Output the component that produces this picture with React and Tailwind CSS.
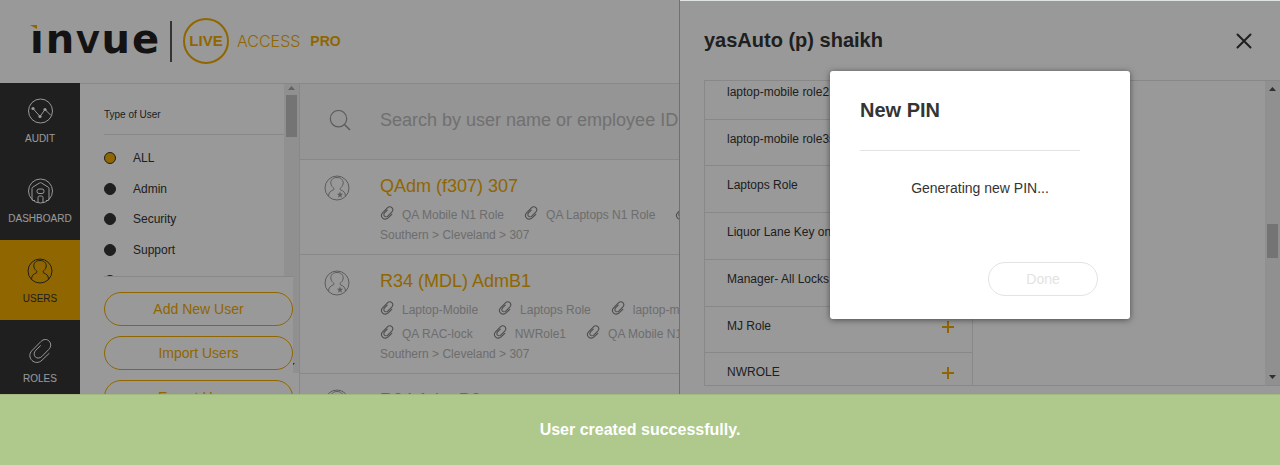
import React from "react";

const sans = "font-['Liberation_Sans',Arial,sans-serif]";

function AuditIcon() {
  return (
    <svg viewBox="0 0 26 26" className="size-[26px]" fill="none" stroke="currentColor" strokeWidth="1" aria-hidden="true">
      <circle cx="13.500" cy="13" r="12" />
      <path d="M6 10.500 L13 18.500 L18 11.500 L24 17.500" />
      <g fill="currentColor" stroke="none">
        <circle cx="6" cy="10.500" r="1.600" />
        <circle cx="13" cy="18.500" r="1.600" />
        <circle cx="18" cy="11.500" r="1.600" />
      </g>
    </svg>
  );
}

function HomeIcon() {
  return (
    <svg viewBox="0 0 26 26" className="size-[26px]" fill="none" stroke="currentColor" strokeWidth="1" aria-hidden="true">
      <circle cx="13.500" cy="13" r="12" />
      <path d="M8 22.500 H6.500 Q5 22.500 5 21 V10.500 Q5 9.500 6 9 L12.500 5 Q13.500 4.300 14.500 5 L21 9 Q22 9.500 22 10.500 V21 Q22 22.500 20.500 22.500 H19" />
      <rect x="10" y="11" width="7" height="4.500" rx="2" />
      <path d="M11 24.500 V19.500 Q11 18 12.500 18 H14.500 Q16 18 16 19.500 V24.500" />
    </svg>
  );
}

function UserIcon({ star }) {
  return (
    <svg viewBox="0 0 26 26" className="size-[26px] shrink-0" fill="none" stroke="currentColor" strokeWidth="1" aria-hidden="true">
      <circle cx="13" cy="13" r="12" />
      <path d="M4.500 21.500 C4.500 17.500 6.500 16 9.500 14.800 C10.500 14.300 10 13.300 9 12.500 C7.500 11 6.800 9.500 6.800 7.800 C6.800 4.500 9.500 2.500 13 2.500 C16.500 2.500 19.200 4.500 19.200 7.800 C19.200 9.500 18.500 11 17 12.500 C16 13.300 15.500 14.300 16.500 14.800 C19.500 16 21.500 17.500 21.500 21.500" />
      {star && (
        <path
          fill="currentColor"
          stroke="none"
          d="M16 16.300 L16.800 18.800 L19.200 18.800 L17.300 20.300 L18 22.800 L16 21.300 L14 22.800 L14.700 20.300 L12.800 18.800 L15.200 18.800 Z"
        />
      )}
    </svg>
  );
}

function ClipIcon({ className, strokeWidth = 1 }) {
  return (
    <svg viewBox="0 0 26 26" className={className} fill="none" stroke="currentColor" strokeWidth={strokeWidth} strokeLinecap="round" aria-hidden="true">
      <path d="M22 15.500 L15 22.200 C12 25.200 7.500 25 5 22.500 C2.300 19.800 2 15.700 4.800 12.800 L13.800 3.600 C16.600 0.800 20 1 22 3 C24.200 5.200 24.400 8.600 21.800 11.400 L15 18.400 C13 20.400 10 20.600 8.300 18.900 C6.600 17.200 6.800 14.200 8.800 12.200 L13.500 7.700" />
    </svg>
  );
}

function SearchIcon() {
  return (
    <svg viewBox="0 0 22 22" className="size-[22px] shrink-0 text-[#999]" fill="none" stroke="currentColor" strokeWidth="1.200" aria-hidden="true">
      <circle cx="9.500" cy="8.700" r="8.200" />
      <path d="M15.500 14.500 L21 20" strokeWidth="1.500" />
    </svg>
  );
}

function Arrow({ down, className }) {
  return (
    <svg viewBox="0 0 7 4" className={`h-1 w-[7px] shrink-0 ${className}`} fill="currentColor" aria-hidden="true">
      <path d={down ? "M0 0 H7 L3.500 4 Z" : "M0 4 H7 L3.500 0 Z"} />
    </svg>
  );
}

function Brand() {
  return (
    <div className="flex items-center" aria-label="InVue Live Access Pro">
      <div className="relative flex w-[130px] items-baseline gap-[2px] font-['DejaVu_Sans',sans-serif] text-[40px] leading-[40px] font-bold text-[#231f20]">
        <svg viewBox="0 0 7 4" className="absolute top-[6px] left-0 h-1 w-[7px] fill-[#f0ab00]" aria-hidden="true">
          <path d="M0 0 H7 V4 Z" />
        </svg>
        <span>ı</span>
        <span>n</span>
        <span className="text-[30px]">V</span>
        <span>u</span>
        <span>e</span>
      </div>
      <div className="ml-[10px] h-[41px] w-[2px] bg-[#58585a]" />
      <div className="ml-[11px] flex size-[46px] items-center justify-center rounded-full border-2 border-[#f0ab00] text-[15px] font-bold text-[#f0ab00]">
        LIVE
      </div>
      <div className="ml-2 flex items-center gap-[10px] text-[16px] text-[#f0ab00]">
        <span className="font-[Inter,sans-serif] font-light">ACCESS</span>
        <span className="text-[14px] font-bold">PRO</span>
      </div>
    </div>
  );
}

const nav = [
  { label: "AUDIT", icon: <AuditIcon />, cls: "h-[77px] text-white" },
  { label: "DASHBOARD", icon: <HomeIcon />, cls: "h-20 text-white" },
  { label: "USERS", icon: <UserIcon />, cls: "h-20 bg-[#f0ab00] text-[#343434]" },
  { label: "ROLES", icon: <ClipIcon className="size-[26px]" />, cls: "h-20 text-white" },
];

const userTypes = ["ALL", "Admin", "Security", "Support", "User"];

const users = [
  {
    name: "QAdm (f307) 307",
    roles: [["QA Mobile N1 Role", "QA Laptops N1 Role", "Laptop-Mobile"]],
  },
  {
    name: "R34 (MDL) AdmB1",
    roles: [
      ["Laptop-Mobile", "Laptops Role", "laptop-mobile role2"],
      ["QA RAC-lock", "NWRole1", "QA Mobile N1 Role"],
    ],
  },
  { name: "R34 Adm B2", roles: [["Laptops Role"]] },
];

const roles = [
  "laptop-mobile role2",
  "laptop-mobile role3s",
  "Laptops Role",
  "Liquor Lane Key only",
  "Manager- All Locks",
  "MJ Role",
  "NWROLE",
];

function Sidebar() {
  return (
    <nav className="w-20 shrink-0 bg-[#343434]">
      {nav.map((n) => (
        <a key={n.label} href={`#${n.label.toLowerCase()}`} className={`flex flex-col items-center justify-end gap-[9px] pb-[15px] text-[10px] leading-[12px] ${n.cls}`}>
          {n.icon}
          {n.label}
        </a>
      ))}
    </nav>
  );
}

function Filters() {
  return (
    <aside className="relative flex w-[220px] shrink-0 flex-col border-t border-r border-[#e3e3e3]">
      <div className="flex h-[289px] justify-between">
        <fieldset className="h-48 flex-1 overflow-hidden pl-6">
          <legend className="contents">
            <span className="flex h-[51px] items-end border-b border-[#e3e3e3] pb-[13px] text-[10px] leading-[12px] text-[#343434]">
              Type of User
            </span>
          </legend>
          <div className="mt-2 grid h-[153px] grid-rows-5">
            {userTypes.map((t, i) => (
              <label key={t} className="flex items-center gap-[17px] text-[12px] leading-[16px] text-[#343434]">
                <input
                  type="radio"
                  name="userType"
                  defaultChecked={i === 0}
                  className="size-3 appearance-none rounded-full border border-[#343434] bg-[#343434] checked:bg-[#f0ab00]"
                />
                {t}
              </label>
            ))}
          </div>
        </fieldset>
        <div className="flex w-[15px] flex-col items-center gap-[5px] bg-[#f1f1f1] pt-[2px] pb-[6px]">
          <Arrow className="text-[#a3a3a3]" />
          <div className="h-[42px] w-[11px] bg-[#c1c1c1]" />
          <Arrow down className="mt-auto text-[#505050]" />
        </div>
      </div>
      <div className="absolute top-48 left-6 flex w-[189px] flex-col gap-[10px] border-t border-[#e3e3e3] bg-white pt-[15px]">
        {["Add New User", "Import Users", "Export Users"].map((b) => (
          <button key={b} type="button" className="h-[34px] rounded-full border border-[#f0ab00] text-[14px] text-[#f0ab00]">
            {b}
          </button>
        ))}
      </div>
    </aside>
  );
}

function UserList() {
  return (
    <main className="min-w-0 flex-1 border-t border-[#e3e3e3] whitespace-nowrap">
      <div className="flex h-[76px] items-center gap-[29px] border-b border-[#e3e3e3] bg-[#f8f8f8] pb-[2px] pl-[29px]">
        <SearchIcon />
        <input
          type="search"
          aria-label="Search users"
          placeholder="Search by user name or employee ID"
          className="w-full bg-transparent text-[18px] text-[#343434] outline-none placeholder:text-[#bbb]"
        />
      </div>
      {users.map((u) => (
        <article key={u.name} className="flex gap-[30px] border-b border-[#e3e3e3] pt-[14px] pb-[11px] pl-6 text-[#999]">
          <div className="pt-px">
            <UserIcon star />
          </div>
          <div>
            <h2 className="mb-[5px] text-[18px] leading-[24px] text-[#f0ab00]">{u.name}</h2>
            {u.roles.map((line) => (
              <ul key={line[0]} className="flex h-6 items-center gap-5">
                {line.map((r) => (
                  <li key={r} className="flex items-center gap-2 text-[12px]">
                    <ClipIcon className="mb-[5px] size-[14px] shrink-0 text-[#808080]" strokeWidth={2} />
                    <span className="text-[#b6b6b6]">{r}</span>
                  </li>
                ))}
              </ul>
            ))}
            <p className="text-[12px] leading-[16px] text-[#b6b6b6]">Southern &gt; Cleveland &gt; 307</p>
          </div>
        </article>
      ))}
    </main>
  );
}

function Drawer() {
  return (
    <section className="absolute inset-y-0 right-0 w-[601px] border-l border-[#bbb] bg-white pl-6 text-[#343434]">
      <div className="flex h-20 items-center justify-between pr-7">
        <h1 className="text-[20px] font-bold">yasAuto (p) shaikh</h1>
        <button type="button" aria-label="Close" className="pt-[2px]">
          <svg viewBox="0 0 16 16" className="size-4" stroke="currentColor" strokeWidth="2" strokeLinecap="round" aria-hidden="true">
            <path d="M1.500 1.500 L14.500 14.500 M14.500 1.500 L1.500 14.500" />
          </svg>
        </button>
      </div>
      <div className="flex h-[306px] justify-between overflow-hidden border-y border-l border-[#e3e3e3]">
        <ul className="-mt-2 grid h-[327px] w-[268px] grid-rows-7 border-r border-[#e3e3e3] text-[12px] leading-[16px]">
          {roles.map((r) => (
            <li key={r} className="flex items-start justify-between border-b border-[#e3e3e3] pt-[11px] pr-[18px] pl-[22px]">
              <span>{r}</span>
              <button type="button" aria-label={`Add ${r}`} className="pt-[3px] text-[#f0ab00]">
                <svg viewBox="0 0 12 12" className="size-3" stroke="currentColor" strokeWidth="2" aria-hidden="true">
                  <path d="M6 0 V12 M0 6 H12" />
                </svg>
              </button>
            </li>
          ))}
        </ul>
        <div className="flex w-[15px] flex-col items-center bg-[#f1f1f1] py-[6px]">
          <Arrow className="text-[#505050]" />
          <div className="mt-[133px] mb-auto h-[34px] w-[11px] bg-[#c1c1c1]" />
          <Arrow down className="text-[#505050]" />
        </div>
      </div>
    </section>
  );
}

function PinDialog() {
  return (
    <div role="dialog" aria-labelledby="pin-title" className="mt-[71px] mr-[150px] w-[300px] rounded-[3px] bg-white pt-[27px] pr-8 pb-[23px] pl-[30px] text-[#343434] shadow-[0_1px_6px_rgba(0,0,0,0.5)]">
      <h2 id="pin-title" className="w-[220px] border-b border-[#e3e3e3] pb-[27px] text-[20px] leading-[25px] font-bold">
        New PIN
      </h2>
      <p className="pt-7 pl-[2px] text-center text-[14px] leading-[18px]">Generating new PIN...</p>
      <div className="flex justify-end pt-[65px]">
        <button type="button" disabled className="h-[34px] w-[110px] rounded-full border border-[#e3e3e3] text-[14px] text-[#e3e3e3]">
          Done
        </button>
      </div>
    </div>
  );
}

export default function App() {
  return (
    <div className={`relative flex h-screen flex-col overflow-hidden bg-white ${sans}`}>
      <header className="flex h-[83px] shrink-0 items-center pb-px pl-[30px]">
        <Brand />
      </header>
      <div className="flex min-h-0 flex-1">
        <Sidebar />
        <Filters />
        <UserList />
      </div>
      <Drawer />
      <div className="absolute inset-0 flex items-start justify-end bg-black/40">
        <div className="absolute top-0 right-0 h-px w-[600px] bg-[#e0e3e3]" />
        <PinDialog />
      </div>
      <div role="status" className="absolute inset-x-0 bottom-0 flex h-[71px] items-center justify-center border-t border-[#9fb97e] bg-[#aec98b] text-[16px] font-bold text-white">
        User created successfully.
      </div>
    </div>
  );
}
